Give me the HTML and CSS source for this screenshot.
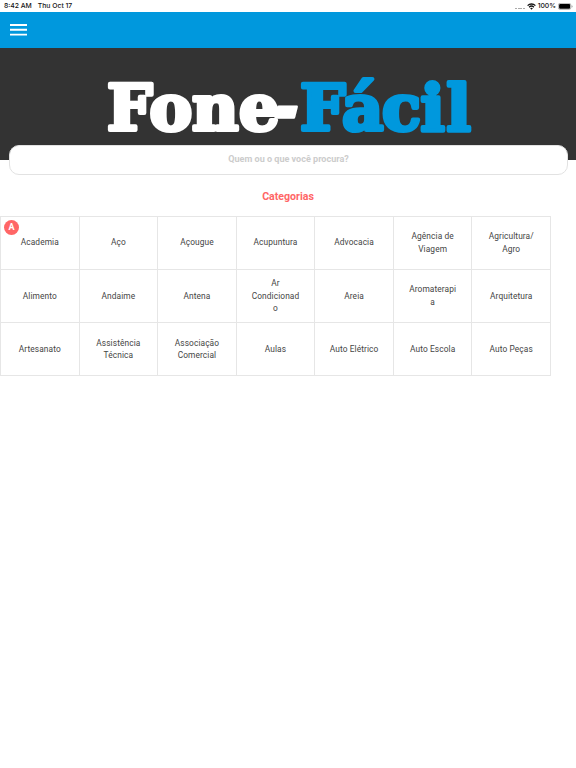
FILE: index.html
```html
<!DOCTYPE html>
<html lang="pt-BR">
<head>
<meta charset="utf-8">
<title>Fone-Fácil</title>
<link rel="stylesheet" href="styles.css">
</head>
<body>
<div class="status">
  <span class="time">8:42 AM</span><span class="date">Thu Oct 17</span>
  <span class="dots"></span>
  <svg class="wifi" width="9" height="7" viewBox="0 0 18 14"><g fill="none" stroke="#111" stroke-width="2.6"><path d="M1.2 5.2a11 11 0 0 1 15.6 0"/><path d="M4.2 8.4a6.8 6.8 0 0 1 9.6 0"/></g><path d="M6.3 10.7a3.8 3.8 0 0 1 5.4 0L9 13.5z" fill="#111"/></svg>
  <span class="percent">100%</span>
  <svg class="battery" width="15" height="7" viewBox="0 0 15 7"><rect x=".4" y=".4" width="12.4" height="6" rx="1.6" fill="#fff" stroke="#888" stroke-width=".6"/><rect x="1.1" y="1" width="11" height="4.8" rx="1" fill="#000"/><path d="M13.6 2.3q1 .3 1 1.1t-1 1.1z" fill="#999"/></svg>
</div>
<header class="bar"><svg width="17" height="12" viewBox="0 0 17 12"><path d="M0 1h17M0 5.8h17M0 10.6h17" stroke="#fff" stroke-width="1.9"/></svg></header>
<div class="hero">
  <svg width="576" height="112" viewBox="0 0 576 112" class="logo">
    <g class="white">
      <text y="81.5" x="107 149.5 192 239">Fone</text>
      <text class="dash" transform="translate(268.5 84.5) skewX(-14) scale(1 1.3)">-</text>
    </g>
    <text y="81.5" x="300 342 382 420.5 446.5" class="blue">Fácil</text>
  </svg>
</div>
<div class="search">Quem ou o que você procura?</div>
<h1>Categorias</h1>
<main class="grid">
  <div class="cell"><span class="badge">A</span><p>Academia</p></div>
  <div class="cell"><p>Aço</p></div>
  <div class="cell"><p>Açougue</p></div>
  <div class="cell"><p>Acupuntura</p></div>
  <div class="cell"><p>Advocacia</p></div>
  <div class="cell"><p>Agência de<br>Viagem</p></div>
  <div class="cell"><p>Agricultura/<br>Agro</p></div>
  <div class="cell"><p>Alimento</p></div>
  <div class="cell"><p>Andaime</p></div>
  <div class="cell"><p>Antena</p></div>
  <div class="cell"><p>Ar<br>Condicionad<br>o</p></div>
  <div class="cell"><p>Areia</p></div>
  <div class="cell"><p>Aromaterapi<br>a</p></div>
  <div class="cell"><p>Arquitetura</p></div>
  <div class="cell"><p>Artesanato</p></div>
  <div class="cell"><p>Assistência<br>Técnica</p></div>
  <div class="cell"><p>Associação<br>Comercial</p></div>
  <div class="cell"><p>Aulas</p></div>
  <div class="cell"><p>Auto Elétrico</p></div>
  <div class="cell"><p>Auto Escola</p></div>
  <div class="cell"><p>Auto Peças</p></div>
</main>
</body>
</html>
```
FILE: styles.css
```css
* { box-sizing: border-box; }
body { margin: 0; background: #fff; font-family: Roboto, sans-serif; color: #444; }
.status { display: flex; align-items: center; height: 12px; padding: 0 3px 0 4px; font: 500 6.8px/12px Inter, sans-serif; color: #111; }
.date { margin-left: 6px; }
.dots { width: 10px; height: 1px; margin: 4px 2px 0 auto; background: repeating-linear-gradient(90deg, #aaa 0 2px, #fff 2px 2.7px); }
.percent { margin: 0 2px; }
.bar { display: flex; align-items: center; height: 36px; padding: 0 0 1px 10px; background: #0098dd; }
.hero { height: 112px; background: #333; }
.logo { display: block; }
.logo text { font: bold 64px "DejaVu Serif", serif; stroke-width: 4.2px; stroke-linejoin: round; }
.logo .dash { font-size: 60px; stroke-width: 2.4px; }
.white { fill: #fff; stroke: #fff; }
.blue { fill: #0098dd; stroke: #0098dd; }
.search { position: relative; height: 30px; margin: -15.5px 8px 0 9px; border: 1px solid #e2e2e2; border-radius: 10px; background: #fff; color: #ccc; font-weight: 700; font-size: 9.05px; line-height: 26px; text-align: center; }
h1 { margin: 14px 0 0; height: 15px; font-size: 10.6px; line-height: 15px; font-weight: 700; text-align: center; color: #ff6666; }
.grid { display: grid; width: 551px; margin-top: 12px; grid-template-columns: repeat(7, 1fr); grid-auto-rows: 53.3px; border: solid #e6e6e6; border-width: 0 1px 1px 0; }
.cell { position: relative; display: flex; align-items: center; justify-content: center; border: solid #e6e6e6; border-width: 1px 0 0 1px; }
.cell p { margin: 0; font-size: 8.35px; line-height: 12.5px; letter-spacing: .1px; text-align: center; }
.badge { position: absolute; left: 3px; top: 3px; width: 15px; height: 15px; border-radius: 50%; background: #ff6666; color: #fff; font-weight: 700; font-size: 9px; line-height: 15px; text-align: center; }
```
